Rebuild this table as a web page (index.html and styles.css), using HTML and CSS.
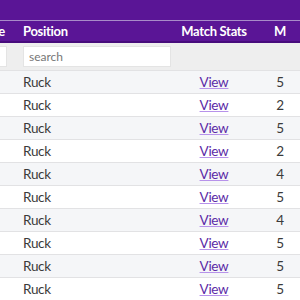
FILE: index.html
```html
<!DOCTYPE html>
<html>
<head>
<meta charset="utf-8">
<link rel="stylesheet" href="styles.css">
</head>
<body>
<div class="wrap">
  <div class="topband"></div>
  <table class="grid">
    <colgroup>
      <col class="c-name"><col class="c-pos"><col class="c-stats"><col class="c-m">
    </colgroup>
    <thead>
      <tr class="head">
        <th class="name">Name</th>
        <th>Position</th>
        <th class="center">Match Stats</th>
        <th class="center">M</th>
      </tr>
      <tr class="filter">
        <td><div class="inp"></div></td>
        <td><div class="inp">search</div></td>
        <td></td>
        <td></td>
      </tr>
    </thead>
    <tbody>
      <tr><td></td><td>Ruck</td><td class="center"><a href="#">View</a></td><td class="center">5</td></tr>
      <tr><td></td><td>Ruck</td><td class="center"><a href="#">View</a></td><td class="center">2</td></tr>
      <tr><td></td><td>Ruck</td><td class="center"><a href="#">View</a></td><td class="center">5</td></tr>
      <tr><td></td><td>Ruck</td><td class="center"><a href="#">View</a></td><td class="center">2</td></tr>
      <tr><td></td><td>Ruck</td><td class="center"><a href="#">View</a></td><td class="center">4</td></tr>
      <tr><td></td><td>Ruck</td><td class="center"><a href="#">View</a></td><td class="center">5</td></tr>
      <tr><td></td><td>Ruck</td><td class="center"><a href="#">View</a></td><td class="center">4</td></tr>
      <tr><td></td><td>Ruck</td><td class="center"><a href="#">View</a></td><td class="center">5</td></tr>
      <tr><td></td><td>Ruck</td><td class="center"><a href="#">View</a></td><td class="center">5</td></tr>
      <tr><td></td><td>Ruck</td><td class="center"><a href="#">View</a></td><td class="center">5</td></tr>
    </tbody>
  </table>
</div>
</body>
</html>
```
FILE: styles.css
```css
html, body {
  margin: 0;
  padding: 0;
  background: #fff;
  overflow: hidden;
}
body {
  font-family: Lato, "Noto Sans", sans-serif;
  font-size: 13.5px;
  letter-spacing: -0.3px;
  color: #3a3a3a;
}
.wrap {
  width: 300px;
  overflow: hidden;
}
.topband {
  height: 20px;
  background: #5a1596;
  border-bottom: 1px solid #a88bc9;
}
.grid {
  border-collapse: collapse;
  table-layout: fixed;
  width: 396px;
  margin-left: -85px;
}
.c-name { width: 100px; }
.c-pos { width: 164px; }
.c-stats { width: 70px; }
.c-m { width: 62px; }
.head th {
  background: #5a1596;
  color: #fff;
  font-weight: 700;
  font-size: 13px;
  text-align: left;
  height: 20px;
  padding: 0 8px;
  border-bottom: 2px solid #470c7c;
  white-space: nowrap;
}
.head th.name {
  text-align: right;
  padding-right: 10px;
}
.head th.center,
tbody td.center {
  text-align: center;
  padding: 0;
}
.filter td {
  background: #eeeeee;
  padding: 2px 8px 3px 8px;
  height: 22px;
}
.filter td:first-child { padding-left: 0; }
.inp {
  background: #fff;
  height: 21px;
  box-sizing: border-box;
  border: 1px solid #e4e4e4;
  font-size: 12px;
  letter-spacing: 0;
  line-height: 19px;
  color: #777;
  padding-left: 5px;
}
tbody td {
  height: 22px;
  padding: 0 8px;
  border-top: 1px solid #e2e2e4;
  white-space: nowrap;
}
tbody tr:nth-child(odd) td { background: #f5f6f8; }
a {
  color: #5b2aa6;
  text-decoration: underline;
  text-decoration-color: #b792ea;
}
```
